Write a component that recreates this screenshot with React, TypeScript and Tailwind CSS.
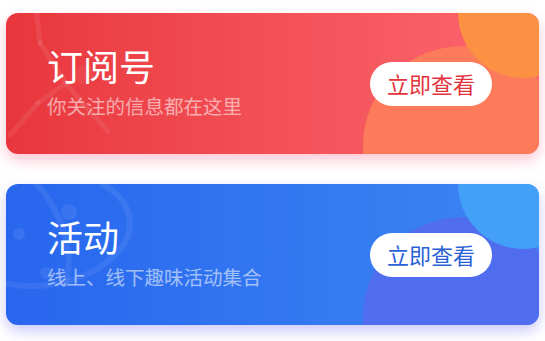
import React from "react";

const FONT = { fontFamily: '"Noto Sans CJK SC", "Noto Sans", sans-serif' };

function PaperPlane() {
  return (
    <svg className="absolute left-0 top-0" width="140" height="141" viewBox="0 0 140 141" fill="none">
      <g stroke="white" strokeOpacity="0.08" strokeWidth="5" strokeLinecap="round" strokeLinejoin="round">
        <path d="M30 -4 L34 30" />
        <path d="M4 122 L32 90" />
        <path d="M76 90 L102 118" />
        <path d="M34 30 L60 70 L32 90" />
        <path d="M60 70 L76 90" />
      </g>
      <circle cx="78" cy="62" r="10" fill="white" fillOpacity="0.05" />
    </svg>
  );
}

function Planet() {
  return (
    <svg className="absolute left-0 top-0" width="150" height="141" viewBox="0 0 150 141" fill="none">
      <g stroke="white" strokeOpacity="0.07" strokeWidth="6" strokeLinecap="round">
        <path d="M26 -6 C 50 20, 70 60, 60 100" />
        <path d="M-6 98 C 30 108, 90 100, 118 60 C 132 36, 120 12, 96 0" />
      </g>
      <circle cx="13" cy="50" r="6" fill="white" fillOpacity="0.08" />
      <circle cx="63" cy="28" r="8" fill="white" fillOpacity="0.08" />
      <circle cx="40" cy="89" r="6" fill="white" fillOpacity="0.08" />
    </svg>
  );
}

function Card({
  title,
  subtitle,
  variant,
}: {
  title: string;
  subtitle: string;
  variant: "red" | "blue";
}) {
  const red = variant === "red";
  return (
    <div
      className={
        red
          ? "relative h-[141px] rounded-[12px] overflow-hidden bg-gradient-to-r from-[#e8363c] to-[#fd6670] shadow-[0_6px_14px_rgba(245,90,130,0.35)]"
          : "relative h-[141px] rounded-[12px] overflow-hidden bg-gradient-to-r from-[#2866ee] to-[#3d86f3] shadow-[0_6px_14px_rgba(110,100,240,0.35)]"
      }
    >
      {red ? <PaperPlane /> : <Planet />}
      <div
        className={
          red
            ? "absolute left-[357px] top-[33px] w-[200px] h-[200px] rounded-full bg-[#fc7b5b]"
            : "absolute left-[357px] top-[33px] w-[200px] h-[200px] rounded-full bg-[#506cef]"
        }
      />
      <div
        className={
          red
            ? "absolute left-[452px] top-[-65px] w-[130px] h-[130px] rounded-full bg-[#fc9043]"
            : "absolute left-[452px] top-[-65px] w-[130px] h-[130px] rounded-full bg-[#42a0f8]"
        }
      />
      <div className="relative h-full flex items-center justify-between pl-[41px] pr-[47px]" style={FONT}>
        <div className="flex flex-col self-start pt-[30px]">
          <div className="text-[36px] leading-[44px] text-white">{title}</div>
          <div className="text-[19.5px] leading-[24px] mt-[7px] text-white/55">{subtitle}</div>
        </div>
        <div
          className={
            red
              ? "w-[122px] h-[44px] rounded-full bg-white flex items-center justify-center text-[22px] text-[#e2343c]"
              : "w-[122px] h-[44px] rounded-full bg-white flex items-center justify-center text-[22px] text-[#2a62d6]"
          }
        >
          立即查看
        </div>
      </div>
    </div>
  );
}

export default function App() {
  return (
    <div className="w-[545px] h-[341px] bg-white pt-[13px] px-[6px] flex flex-col gap-[30px] overflow-hidden">
      <Card title="订阅号" subtitle="你关注的信息都在这里" variant="red" />
      <Card title="活动" subtitle="线上、线下趣味活动集合" variant="blue" />
    </div>
  );
}
